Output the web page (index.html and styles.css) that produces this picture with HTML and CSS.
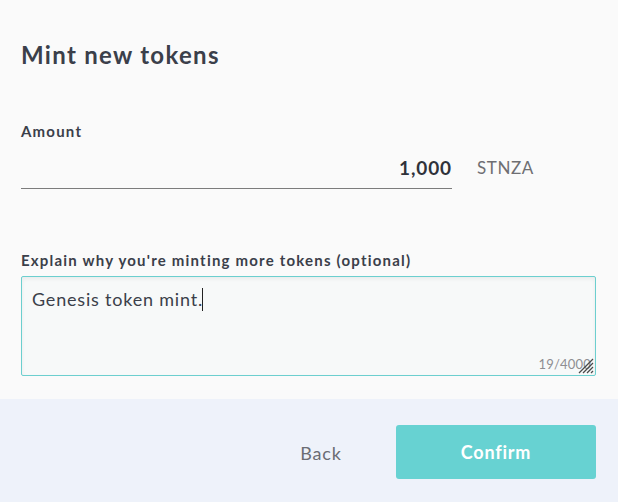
FILE: index.html
```html
<!DOCTYPE html>
<html>
<head>
<meta charset="utf-8">
<link rel="stylesheet" href="styles.css">
</head>
<body>
<div class="modal">
  <div class="content">
    <h1 class="title">Mint new tokens</h1>
    <div class="field amount-field">
      <label class="label">Amount</label>
      <div class="amount-row">
        <div class="amount-input">1,000</div>
        <span class="unit">STNZA</span>
      </div>
    </div>
    <div class="field reason-field">
      <label class="label">Explain why you're minting more tokens (optional)</label>
      <div class="textarea">
        <span class="ta-text">Genesis token mint.</span><span class="caret"></span>
        <span class="counter">19/4000</span>
        <svg class="resize" width="17" height="17" viewBox="0 0 17 17">
          <path d="M2 16 L16 2 M6 16 L16 6 M10 16 L16 10 M14 16 L16 14" stroke="#4a4a4a" stroke-width="1.3"/>
        </svg>
      </div>
    </div>
  </div>
  <div class="footer">
    <button class="btn-back">Back</button>
    <button class="btn-confirm">Confirm</button>
  </div>
</div>
</body>
</html>
```
FILE: styles.css
```css
* { box-sizing: border-box; }
html, body { margin: 0; padding: 0; }
body {
  width: 618px;
  height: 502px;
  background: #fafafa;
  font-family: Lato, "Noto Sans", sans-serif;
  color: #3b3f4a;
  overflow: hidden;
}
.modal { display: flex; flex-direction: column; height: 502px; }
.content { padding: 40px 22px 0 21px; height: 399px; background: #fafafa; }
.title {
  margin: 0;
  font-size: 24px;
  font-weight: 700;
  letter-spacing: 1.3px;
  line-height: 30px;
  color: #3b3f4a;
}
.label {
  display: block;
  font-size: 15px;
  font-weight: 700;
  line-height: 18px;
  color: #3b3f4a;
  letter-spacing: 1.2px;
}
.amount-field { margin-top: 52px; }
.amount-row { display: flex; align-items: flex-end; margin-top: 16px; }
.amount-input {
  width: 431px;
  text-align: right;
  font-size: 19px;
  font-weight: 700;
  line-height: 24px;
  padding-bottom: 8px;
  border-bottom: 1px solid #7c7c7c;
  color: #2f323a;
  letter-spacing: 0.9px;
}
.unit {
  margin-left: 25px;
  font-size: 17px;
  color: #6e6e72;
  line-height: 24px;
  padding-bottom: 9px;
  letter-spacing: 0.6px;
}
.reason-field { margin-top: 62px; }
.textarea {
  position: relative;
  margin-top: 7px;
  width: 575px;
  height: 100px;
  border: 1px solid #6ccfcf;
  border-radius: 2px;
  background: #f7f9f9;
  box-shadow: inset 0 2px 4px rgba(0,0,0,0.06);
  padding: 11px 10px;
  font-size: 18px;
  line-height: 22px;
  color: #3b3f4a;
}
.ta-text { letter-spacing: 0.8px; }
.caret {
  display: inline-block;
  width: 1px;
  height: 23px;
  background: #222;
  vertical-align: top;
  margin-left: -1px;
}
.counter {
  position: absolute;
  right: 4px;
  bottom: 4px;
  font-size: 13px;
  color: #8e8e92;
  line-height: 14px;
  letter-spacing: 0.2px;
}
.resize { position: absolute; right: 1px; bottom: 1px; }
.footer {
  flex: 1;
  background: #eef2fa;
  display: flex;
  justify-content: flex-end;
  align-items: flex-start;
  padding: 26px 22px 0 0;
  gap: 54px;
}
button { font-family: inherit; border: 0; cursor: pointer; padding: 0; }
.btn-back {
  background: transparent;
  font-size: 18px;
  color: #6b6d74;
  height: 54px;
  width: 42px;
  letter-spacing: 0.8px;
  margin-top: 1px;
}
.btn-confirm {
  width: 200px;
  height: 54px;
  background: #67d2d2;
  border-radius: 3px;
  color: #fff;
  font-size: 18px;
  font-weight: 700;
  letter-spacing: 0.8px;
}
```
